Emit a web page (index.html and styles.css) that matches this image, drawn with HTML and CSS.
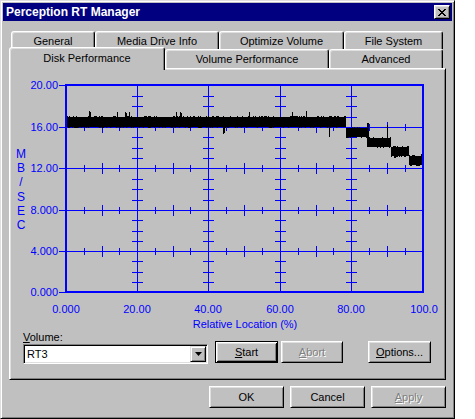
FILE: index.html
```html
<!DOCTYPE html>
<html>
<head>
<meta charset="utf-8">
<title>Perception RT Manager</title>
<link rel="stylesheet" href="styles.css">
</head>
<body>
<div class="window">
  <div class="titlebar">
    <span class="title">Perception RT Manager</span>
    <div class="close">
      <svg width="8" height="7" viewBox="0 0 8 7" shape-rendering="crispEdges">
        <rect x="0" y="0" width="2" height="1"/><rect x="6" y="0" width="2" height="1"/>
        <rect x="1" y="1" width="2" height="1"/><rect x="5" y="1" width="2" height="1"/>
        <rect x="2" y="2" width="4" height="1"/>
        <rect x="3" y="3" width="2" height="1"/>
        <rect x="2" y="4" width="4" height="1"/>
        <rect x="1" y="5" width="2" height="1"/><rect x="5" y="5" width="2" height="1"/>
        <rect x="0" y="6" width="2" height="1"/><rect x="6" y="6" width="2" height="1"/>
      </svg>
    </div>
  </div>
  <div class="content">
    <div class="tabrow back">
      <div class="tab t-general">General</div>
      <div class="tab t-media">Media Drive Info</div>
      <div class="tab t-optimize">Optimize Volume</div>
      <div class="tab t-fs">File System</div>
    </div>
    <div class="tabrow front">
      <div class="tab selected t-disk">Disk Performance</div>
      <div class="tab t-volperf">Volume Performance</div>
      <div class="tab t-adv">Advanced</div>
    </div>
    <div class="panel">
      <svg class="chart" width="433" height="262" viewBox="11 70 433 262">
        <g fill="none" stroke="#0000ff" stroke-width="1" shape-rendering="crispEdges">
          <path d="M138.5 86V293M209.5 86V293M281.5 86V293M352.5 86V293"/>
          <path d="M60 128.5H424M60 169.5H424M60 211.5H424M60 252.5H424M60 86.5H67M60 293.5H67"/>
          <path id="ticks" d=""/>
        </g>
        <path id="data" d="" fill="none" stroke="#000" stroke-width="1" shape-rendering="crispEdges"/>
        <rect x="67" y="86" width="357" height="207" fill="none" stroke="#0000ff" stroke-width="2" shape-rendering="crispEdges"/>
        <g class="axis-text" text-anchor="end">
          <text x="59" y="90">20.00</text>
          <text x="59" y="132">16.00</text>
          <text x="59" y="173">12.00</text>
          <text x="59" y="215">8.000</text>
          <text x="59" y="256">4.000</text>
          <text x="59" y="297">0.000</text>
        </g>
        <g class="axis-text" text-anchor="middle">
          <text x="67" y="314">0.000</text>
          <text x="138" y="314">20.00</text>
          <text x="209" y="314">40.00</text>
          <text x="281" y="314">60.00</text>
          <text x="352" y="314">80.00</text>
          <text x="425" y="314">100.0</text>
          <text x="246" y="329">Relative Location (%)</text>
        </g>
        <g class="axis-text unit" text-anchor="middle">
          <text x="22" y="159">M</text>
          <text x="22" y="173">B</text>
          <text x="22" y="187">/</text>
          <text x="22" y="202">S</text>
          <text x="22" y="216">E</text>
          <text x="22" y="230">C</text>
        </g>
      </svg>
      <div class="controls">
        <div class="volume">
          <div class="label"><u>V</u>olume:</div>
          <div class="combo">
            <span class="combo-text">RT3</span>
            <div class="combo-btn">
              <svg width="7" height="4" viewBox="0 0 7 4"><polygon points="0,0 7,0 3.5,4" fill="#000"/></svg>
            </div>
          </div>
        </div>
        <button class="btn default b-start"><u>S</u>tart</button>
        <button class="btn disabled b-abort"><u>A</u>bort</button>
        <button class="btn b-options"><u>O</u>ptions...</button>
      </div>
    </div>
    <div class="footer">
      <button class="btn b-foot">OK</button>
      <button class="btn b-foot">Cancel</button>
      <button class="btn b-foot disabled"><u>A</u>pply</button>
    </div>
  </div>
</div>
<script src="chart.js"></script>
</body>
</html>
```

FILE: styles.css
```css
* { box-sizing: border-box; }

body {
  margin: 0;
  background: #fff;
  font-family: "Liberation Sans", Arial, sans-serif;
  font-size: 11px;
  color: #000;
}

.window {
  width: 455px;
  height: 419px;
  background: #c0c0c0;
  border: 1px solid;
  border-color: #dfdfdf #000 #000 #dfdfdf;
  box-shadow: inset 1px 1px #fff, inset -1px -1px #808080;
  padding: 2px;
  display: flex;
  flex-direction: column;
}

.titlebar {
  height: 18px;
  background: #000080;
  display: flex;
  align-items: center;
  justify-content: space-between;
  padding: 0 2px 0 3px;
}

.title {
  color: #fff;
  font-weight: bold;
  font-size: 12px;
}

.close {
  width: 16px;
  height: 14px;
  background: #c0c0c0;
  border: 1px solid;
  border-color: #fff #000 #000 #fff;
  box-shadow: inset 1px 1px #dfdfdf, inset -1px -1px #808080;
  display: flex;
  align-items: center;
  justify-content: center;
  padding-right: 1px;
}

.content {
  flex: 1;
  display: flex;
  flex-direction: column;
  padding: 10px 6px 0 6px;
}

.tabrow {
  display: flex;
}

.tabrow.back {
  margin-left: 2px;
}

.tabrow.front {
  margin-top: -2px;
  height: 21px;
  align-items: flex-start;
}

.tab {
  height: 18px;
  background: #c0c0c0;
  border: 1px solid;
  border-bottom: 0;
  border-color: #fff #000 transparent #fff;
  border-radius: 3px 3px 0 0;
  box-shadow: inset 1px 1px #dfdfdf, inset -1px 0 #808080;
  display: flex;
  align-items: center;
  justify-content: center;
  flex: none;
}

.tabrow.front .tab {
  margin-top: 2px;
  height: 19px;
}

.tabrow.front .tab.selected {
  margin-top: 0;
  height: 23px;
  margin-bottom: -2px;
  padding-bottom: 2px;
  z-index: 1;
}

.t-general { width: 84px; }
.t-media { width: 124px; }
.t-optimize { width: 125px; }
.t-fs { width: 99px; }
.t-disk { width: 156px; }
.t-volperf { width: 164px; }
.t-adv { width: 114px; }

.panel {
  height: 312px;
  border: 1px solid;
  border-color: #fff #000 #000 #fff;
  box-shadow: inset 1px 1px #dfdfdf, inset -1px -1px #808080;
  display: flex;
  flex-direction: column;
}

.chart {
  display: block;
  flex: none;
}

.axis-text text {
  font-family: "Liberation Sans", Arial, sans-serif;
  font-size: 11px;
  fill: #0000ff;
}

.axis-text.unit text {
  font-size: 12px;
}

.controls {
  display: flex;
  align-items: flex-end;
  padding-left: 13px;
}

.volume {
  display: flex;
  flex-direction: column;
  width: 185px;
}

.label {
  line-height: 12px;
  margin-bottom: 1px;
}

.combo {
  height: 20px;
  background: #fff;
  border: 1px solid;
  border-color: #808080 #fff #fff #808080;
  box-shadow: inset 1px 1px #000, inset -1px -1px #dfdfdf;
  padding: 1px;
  display: flex;
  align-items: center;
}

.combo-text {
  flex: 1;
  padding-left: 2px;
}

.combo-btn {
  width: 16px;
  height: 16px;
  background: #c0c0c0;
  border: 1px solid;
  border-color: #dfdfdf #000 #000 #dfdfdf;
  box-shadow: inset 1px 1px #fff, inset -1px -1px #808080;
  display: flex;
  align-items: center;
  justify-content: center;
}

.btn {
  height: 22px;
  margin: 0 0 1px 0;
  padding: 0;
  background: #c0c0c0;
  border: 1px solid;
  border-color: #fff #000 #000 #fff;
  box-shadow: inset 1px 1px #dfdfdf, inset -1px -1px #808080;
  font-family: "Liberation Sans", Arial, sans-serif;
  font-size: 11px;
  color: #000;
  display: flex;
  align-items: center;
  justify-content: center;
}

.btn.default {
  border-color: #000;
  box-shadow: inset 1px 1px #fff, inset -1px -1px #000, inset 2px 2px #dfdfdf, inset -2px -2px #808080;
}

.btn.disabled {
  color: #808080;
  text-shadow: 1px 1px #fff;
}

.b-start { width: 63px; margin-left: 7px; }
.b-abort { width: 62px; margin-left: 3px; }
.b-options { width: 63px; margin-left: 25px; }

.footer {
  display: flex;
  justify-content: flex-end;
  gap: 6px;
  margin-top: 6px;
}

.b-foot {
  width: 75px;
  margin: 0;
}
```

FILE: chart.js
```js
(function () {
  var rows = [86, 128, 169, 211, 252, 293];
  var cols = [67, 138, 209, 281, 352, 424];
  var t = '';
  var r, c, j, x, y;
  for (r = 1; r < 5; r++) {
    y = rows[r];
    for (c = 0; c < 5; c++) {
      for (j = 1; j < 4; j++) {
        x = Math.round(cols[c] + (cols[c + 1] - cols[c]) * j / 4);
        var len = j === 2 ? 5 : 3;
        t += 'M' + (x + 0.5) + ' ' + (y - len) + 'V' + (y + len + 1);
      }
    }
  }
  for (c = 1; c < 5; c++) {
    x = cols[c];
    for (r = 0; r < 5; r++) {
      for (j = 1; j < 4; j++) {
        y = Math.round(rows[r] + (rows[r + 1] - rows[r]) * j / 4);
        t += 'M' + (x - 5) + ' ' + (y + 0.5) + 'H' + (x + 6);
      }
    }
  }
  document.getElementById('ticks').setAttribute('d', t);

  var seed = 12345;
  function rnd() {
    seed = (seed * 16807) % 2147483647;
    return seed / 2147483647;
  }
  var steps = [
    [68, 347, 118, 127],
    [347, 369, 129, 137],
    [369, 392, 139, 147],
    [392, 410, 148, 156],
    [410, 424, 157, 165]
  ];
  var tops = {
    90: 112, 91: 113, 118: 113, 126: 113, 127: 114, 130: 113,
    177: 113, 181: 113, 182: 114, 250: 113, 293: 113, 307: 112,
    368: 124, 369: 124, 388: 126, 422: 155, 423: 154
  };
  var bottoms = {
    224: 134, 225: 133, 330: 137, 347: 138, 348: 138, 349: 138, 350: 137,
    368: 147, 369: 147, 388: 147, 392: 148, 395: 158, 396: 158, 410: 157
  };
  var d = '';
  steps.forEach(function (s) {
    for (var px = s[0]; px < s[1]; px++) {
      var top = s[2];
      var bot = s[3];
      if (rnd() < 0.3) top -= 1;
      if (rnd() < 0.25) bot += 1;
      if (tops[px] !== undefined) top = Math.min(top, tops[px]);
      if (bottoms[px] !== undefined) bot = Math.max(bot, bottoms[px]);
      d += 'M' + (px + 0.5) + ' ' + top + 'V' + (bot + 1);
    }
  });
  document.getElementById('data').setAttribute('d', d);
})();
```
